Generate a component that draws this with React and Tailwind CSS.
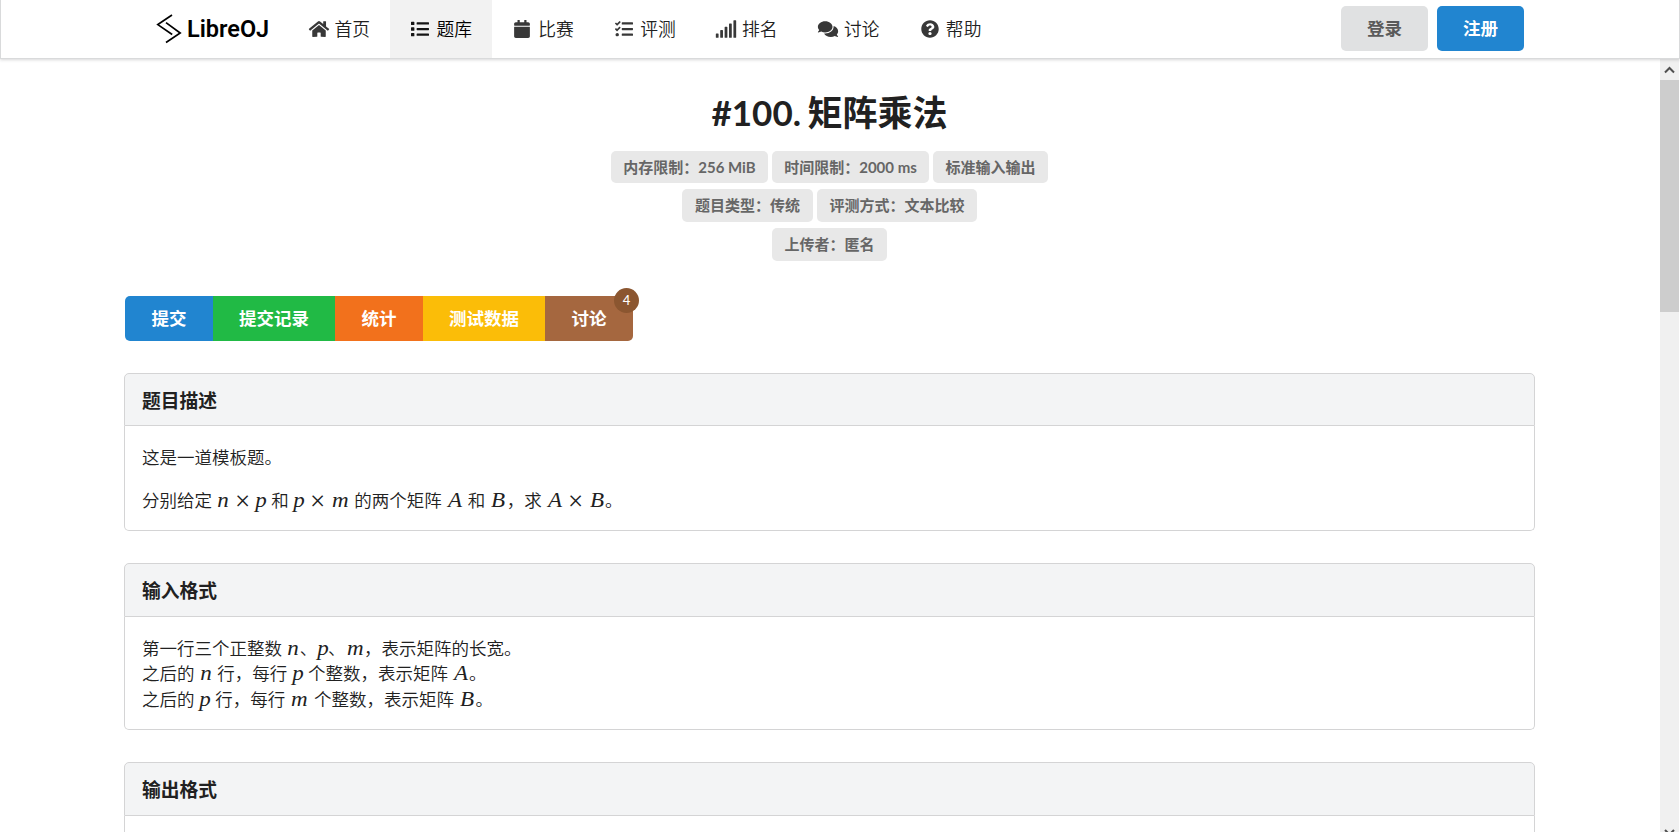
import React from "react";
import {
  FaHome,
  FaList,
  FaCalendar,
  FaTasks,
  FaSignal,
  FaComments,
  FaQuestionCircle,
} from "react-icons/fa";

const navItems = [
  { label: "首页", icon: FaHome },
  { label: "题库", icon: FaList, active: true },
  { label: "比赛", icon: FaCalendar },
  { label: "评测", icon: FaTasks },
  { label: "排名", icon: FaSignal },
  { label: "讨论", icon: FaComments },
  { label: "帮助", icon: FaQuestionCircle },
];

const labelRows = [
  [
    { text: "内存限制：256 MiB", size: "h-8 w-[157px]" },
    { text: "时间限制：2000 ms", size: "h-8 w-[157px]" },
    { text: "标准输入输出", size: "h-8 w-[115px]" },
  ],
  [
    { text: "题目类型：传统", size: "h-[33px] w-[131px]" },
    { text: "评测方式：文本比较", size: "h-[33px] w-[160px]" },
  ],
  [{ text: "上传者：匿名", size: "h-[33px] w-[115px]" }],
];

const actions = [
  { label: "提交", style: "w-[88px] bg-[#2185d0] rounded-l-[5px]" },
  { label: "提交记录", style: "w-[122px] bg-[#21ba45]" },
  { label: "统计", style: "w-[88px] bg-[#f2711c]" },
  { label: "测试数据", style: "w-[122px] bg-[#fbbd08]" },
  { label: "讨论", style: "w-[88px] bg-[#a5673f] rounded-r-[5px]", count: 4 },
];

const glyphWidths = {
  n: "w-[12.7px]",
  p: "w-[10.7px]",
  m: "w-[18.6px]",
  A: "w-[15.9px]",
  B: "w-[16.5px]",
  "×": "w-[16.5px] mx-[4.7px]",
};

function Sym({ ch }) {
  const face = ch === "×" ? "text-[27px] translate-y-[3px]" : "italic text-[20px] scale-x-[1.15]";
  return (
    <span className={`flex justify-center ${glyphWidths[ch]}`}>
      <span className={`font-['Liberation_Serif',serif] leading-none ${face}`}>{ch}</span>
    </span>
  );
}

// Text between dollar signs is set as mathematics.
function Line({ text, className = "" }) {
  return (
    <div className={`flex h-[25.3px] items-baseline whitespace-pre [word-spacing:0.3px] ${className}`}>
      {text.split("$").map((part, i) =>
        i % 2 ? (
          <span key={i} className="flex items-baseline">
            {[...part].map((ch, j) => (
              <Sym key={j} ch={ch} />
            ))}
          </span>
        ) : (
          <span key={i}>{part}</span>
        ),
      )}
    </div>
  );
}

function Section({ title, headClass, bodyClass, children }) {
  return (
    <section>
      <h4
        className={`flex items-center rounded-t-[5px] border border-[#d4d4d5] bg-[#f3f4f5] pl-[17px] pt-[3px] text-[18.75px] font-bold ${headClass}`}
      >
        {title}
      </h4>
      <div
        className={`rounded-b-[5px] border border-t-0 border-[#d4d4d5] pl-[17px] pt-[19px] text-[17.5px] leading-[25.3px] font-[350] ${bodyClass}`}
      >
        {children}
      </div>
    </section>
  );
}

function Logo() {
  return (
    <div className="flex w-[132px] items-center">
      <svg width="26" height="32" viewBox="0 0 26 32" fill="none" stroke="#000" strokeWidth="1.7" className="mt-[-1px]">
        <path d="M16 2 L1.8 11.6 L16.2 21.5" />
        <path d="M10 9.6 L24.2 20 L10 29.5" />
      </svg>
      <span className="ml-[5px] mt-[2px] font-['Roboto',sans-serif] text-[23.5px] font-semibold leading-none text-black">
        LibreOJ
      </span>
    </div>
  );
}

export default function App() {
  return (
    <div className="flex h-[832px] w-[1680px] flex-col overflow-hidden bg-white font-['Lato','Noto_Sans_CJK_SC',sans-serif] text-[#212121]">
      <header className="z-10 flex h-[59px] shrink-0 border-x border-b border-[#d9dadb] bg-white pl-[155px] pr-[155px] shadow-[0_1px_3px_0_rgba(34,36,38,0.18)]">
        <Logo />
        <nav className="flex">
          {navItems.map(({ label, icon: Icon, active }) => (
            <a
              key={label}
              className={`flex w-[101.9px] items-center pl-5 text-[17.8px] font-[350] ${
                active ? "bg-[#f2f2f2] text-black" : "text-[#212121]"
              }`}
            >
              <span className="flex w-[21px] justify-center">
                <Icon className={`h-[18px] w-[22px] shrink-0 ${active ? "text-[#151515]" : "text-[#383838]"}`} />
              </span>
              <span className="ml-[5.5px]">{label}</span>
            </a>
          ))}
        </nav>
        <div className="ml-auto flex gap-[9px] pt-[6px] text-[17.5px] font-bold">
          <button className="h-[45px] w-[87px] rounded-[5px] bg-[#e0e1e2] pt-[2px] text-[#5a5a5a]">登录</button>
          <button className="h-[45px] w-[87px] rounded-[5px] bg-[#2185d0] pt-[2px] text-white">注册</button>
        </div>
      </header>

      <div className="flex min-h-0 flex-1">
        <main className="flex-1 overflow-hidden pl-[124px] pr-[125px]">
          <h1 className="mt-[28px] text-center text-[35px] font-bold leading-[50px] [word-spacing:-2px]">
            #100. 矩阵乘法
          </h1>
          <div className="mt-[14px] flex flex-col items-center gap-[6px] text-[15px] font-bold text-[#666]">
            {labelRows.map((row, i) => (
              <div key={i} className="flex gap-1">
                {row.map(({ text, size }) => (
                  <span
                    key={text}
                    className={`flex items-center justify-center whitespace-nowrap rounded-[5px] bg-[#e8e8e8] ${size}`}
                  >
                    {text}
                  </span>
                ))}
              </div>
            ))}
          </div>

          <div className="mt-[35px] flex pl-px text-[17.5px] font-bold text-white">
            {actions.map(({ label, style, count }) => (
              <button key={label} className={`relative h-[45px] pt-[2px] ${style}`}>
                {label}
                {count && (
                  <span className="absolute -right-[6px] -top-[8px] flex size-[25px] items-center justify-center rounded-full bg-[#8b5630] text-[13px] font-medium">
                    {count}
                  </span>
                )}
              </button>
            ))}
          </div>

          <div className="mt-8 flex flex-col gap-8">
            <Section title="题目描述" headClass="h-[53px]" bodyClass="h-[105px]">
              <Line text="这是一道模板题。" />
              <Line text="分别给定 $n×p$ 和 $p×m$ 的两个矩阵 $A$ 和 $B$，求 $A×B$。" className="mt-[15px]" />
            </Section>
            <Section title="输入格式" headClass="h-[54px]" bodyClass="h-[113px]">
              <Line text="第一行三个正整数 $n$、$p$、$m$，表示矩阵的长宽。" />
              <Line text="之后的 $n$ 行，每行 $p$ 个整数，表示矩阵 $A$。" />
              <Line text="之后的 $p$ 行，每行 $m$ 个整数，表示矩阵 $B$。" />
            </Section>
            <Section title="输出格式" headClass="h-[54px]" bodyClass="h-[120px]" />
          </div>
        </main>

        <aside className="mr-px flex w-[19px] shrink-0 flex-col bg-[#f0f0f0]">
          <div className="flex h-[21px] items-center justify-center">
            <svg width="11" height="8" viewBox="0 0 11 8" fill="none" stroke="#505050" strokeWidth="2">
              <path d="M1 6.5 L5.5 2 L10 6.5" />
            </svg>
          </div>
          <div className="h-[232px] bg-[#cdcdcd]" />
          <div className="mt-auto flex h-[3px] justify-center overflow-hidden">
            <svg width="11" height="8" viewBox="0 0 11 8" fill="none" stroke="#505050" strokeWidth="2" className="shrink-0">
              <path d="M1 1 L5.5 5.5 L10 1" />
            </svg>
          </div>
        </aside>
      </div>
    </div>
  );
}
